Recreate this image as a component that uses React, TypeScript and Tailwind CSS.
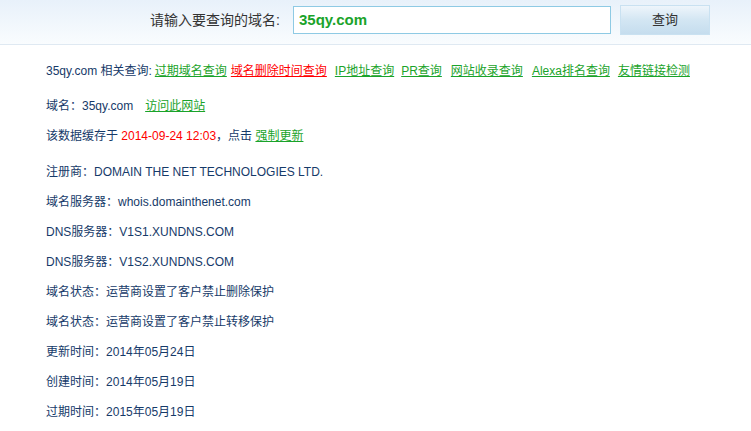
const related = [
  { label: "过期域名查询", red: false, gap: "ml-[3px]" },
  { label: "域名删除时间查询", red: true, gap: "ml-[4px]" },
  { label: "IP地址查询", red: false, gap: "ml-[8px]" },
  { label: "PR查询", red: false, gap: "ml-[7px]" },
  { label: "网站收录查询", red: false, gap: "ml-[9px]" },
  { label: "Alexa排名查询", red: false, gap: "ml-[9px]" },
  { label: "友情链接检测", red: false, gap: "ml-[8px]" },
]

const details = [
  ["注册商", "DOMAIN THE NET TECHNOLOGIES LTD."],
  ["域名服务器", "whois.domainthenet.com"],
  ["DNS服务器", "V1S1.XUNDNS.COM"],
  ["DNS服务器", "V1S2.XUNDNS.COM"],
  ["域名状态", "运营商设置了客户禁止删除保护"],
  ["域名状态", "运营商设置了客户禁止转移保护"],
  ["更新时间", "2014年05月24日"],
  ["创建时间", "2014年05月19日"],
  ["过期时间", "2015年05月19日"],
]

const font = "font-['Liberation_Sans','Noto_Sans_CJK_SC',sans-serif]"

export default function App() {
  return (
    <div className={`min-h-[431px] w-[751px] bg-white text-[12px] text-[#163a69] ${font}`}>
      {/* search bar */}
      <div className="flex h-[45px] items-start border-b border-[#dfe9f2] bg-gradient-to-b from-[#e8f1fa] to-[#f9fcfe]">
        <span className="ml-[150px] mt-[12px] w-[143px] text-[14px] leading-[16px] text-[#333]">请输入要查询的域名:</span>
        <div className="mt-[6px] flex h-[28px] w-[318px] items-center border border-[#8ecae4] bg-white px-[5px] text-[15px] font-bold text-[#1aa32a]">
          35qy.com
        </div>
        <button className="ml-[9px] mt-[5px] h-[30px] w-[90px] border border-[#c9e1f1] bg-gradient-to-b from-[#eef5fb] via-[#d3e6f3] to-[#c5ddee] text-[13px] text-[#333]">
          查询
        </button>
      </div>

      <div className="pl-[46px] pt-[11px]">
        <div className="flex h-[30px] items-center whitespace-nowrap">
          <span>35qy.com 相关查询:</span>
          {related.map((r) => (
            <a
              key={r.label}
              href="#"
              className={`${r.gap} underline ${r.red ? "text-[#ff0000]" : "text-[#1aa32a]"}`}
            >
              {r.label}
            </a>
          ))}
        </div>

        <div className="mt-[5px] flex h-[30px] items-center">
          <span>域名：35qy.com</span>
          <a href="#" className="ml-[12px] text-[#1aa32a] underline">访问此网站</a>
        </div>

        <div className="flex h-[30px] items-center">
          <span>该数据缓存于&nbsp;</span>
          <span className="text-[#ff0000]">2014-09-24 12:03</span>
          <span>，点击&nbsp;</span>
          <a href="#" className="text-[#1aa32a] underline">强制更新</a>
        </div>

        <div className="mt-[6px]">
          {details.map(([k, v], i) => (
            <div key={i} className="flex h-[30px] items-center">
              {k}：{v}
            </div>
          ))}
        </div>
      </div>
    </div>
  )
}
